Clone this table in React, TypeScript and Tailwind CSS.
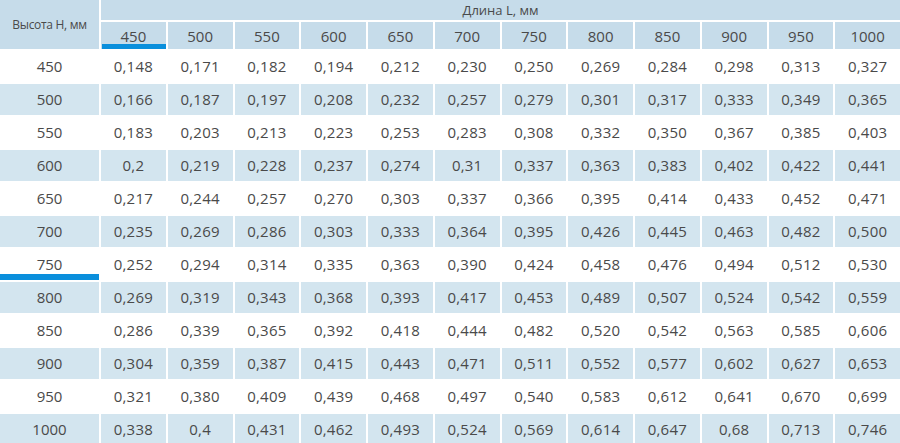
const lengths = [450, 500, 550, 600, 650, 700, 750, 800, 850, 900, 950, 1000];

const rows: [number, string[]][] = [
  [450, ["0,148", "0,171", "0,182", "0,194", "0,212", "0,230", "0,250", "0,269", "0,284", "0,298", "0,313", "0,327"]],
  [500, ["0,166", "0,187", "0,197", "0,208", "0,232", "0,257", "0,279", "0,301", "0,317", "0,333", "0,349", "0,365"]],
  [550, ["0,183", "0,203", "0,213", "0,223", "0,253", "0,283", "0,308", "0,332", "0,350", "0,367", "0,385", "0,403"]],
  [600, ["0,2", "0,219", "0,228", "0,237", "0,274", "0,31", "0,337", "0,363", "0,383", "0,402", "0,422", "0,441"]],
  [650, ["0,217", "0,244", "0,257", "0,270", "0,303", "0,337", "0,366", "0,395", "0,414", "0,433", "0,452", "0,471"]],
  [700, ["0,235", "0,269", "0,286", "0,303", "0,333", "0,364", "0,395", "0,426", "0,445", "0,463", "0,482", "0,500"]],
  [750, ["0,252", "0,294", "0,314", "0,335", "0,363", "0,390", "0,424", "0,458", "0,476", "0,494", "0,512", "0,530"]],
  [800, ["0,269", "0,319", "0,343", "0,368", "0,393", "0,417", "0,453", "0,489", "0,507", "0,524", "0,542", "0,559"]],
  [850, ["0,286", "0,339", "0,365", "0,392", "0,418", "0,444", "0,482", "0,520", "0,542", "0,563", "0,585", "0,606"]],
  [900, ["0,304", "0,359", "0,387", "0,415", "0,443", "0,471", "0,511", "0,552", "0,577", "0,602", "0,627", "0,653"]],
  [950, ["0,321", "0,380", "0,409", "0,439", "0,468", "0,497", "0,540", "0,583", "0,612", "0,641", "0,670", "0,699"]],
  [1000, ["0,338", "0,4", "0,431", "0,462", "0,493", "0,524", "0,569", "0,614", "0,647", "0,68", "0,713", "0,746"]],
];

export default function App() {
  return (
    <div className="w-[900px] h-[443px] overflow-hidden bg-white font-['Open_Sans',sans-serif] text-[#4a4a4a]">
      <div className="grid grid-cols-[99px_repeat(12,1fr)] grid-rows-[20px_27px] auto-rows-[31px] gap-[2px]">
        {/* header */}
        <div className="row-span-2 bg-[#c6dcea] flex items-center justify-center text-[12px] tracking-[-0.3px]">
          Высота H, мм
        </div>
        <div className="col-span-12 bg-[#c6dcea] flex items-center justify-center text-[13px] pt-px">
          Длина L, мм
        </div>
        {lengths.map((l, i) => (
          <div key={l} className="relative bg-[#c6dcea] flex items-center justify-center text-[15px] pt-[2px]">
            {l}
            {i === 0 && <div className="absolute left-px right-0 bottom-0 h-[5px] bg-[#0a8fdc]" />}
          </div>
        ))}

        {/* body */}
        {rows.map(([h, vals], r) => {
          const bg = r % 2 === 1 ? "bg-[#d3e5ef]" : "bg-white";
          return [
            <div key={`h${h}`} className={`relative ${bg} flex items-center justify-center text-[15px]`}>
              {h}
              {h === 750 && <div className="absolute left-0 right-0 bottom-0 h-[6px] bg-[#0a8fdc]" />}
            </div>,
            ...vals.map((v, c) => (
              <div key={`${h}-${c}`} className={`${bg} flex items-center justify-center text-[15px] tracking-[0.2px]`}>
                {v}
              </div>
            )),
          ];
        })}
      </div>
    </div>
  );
}
